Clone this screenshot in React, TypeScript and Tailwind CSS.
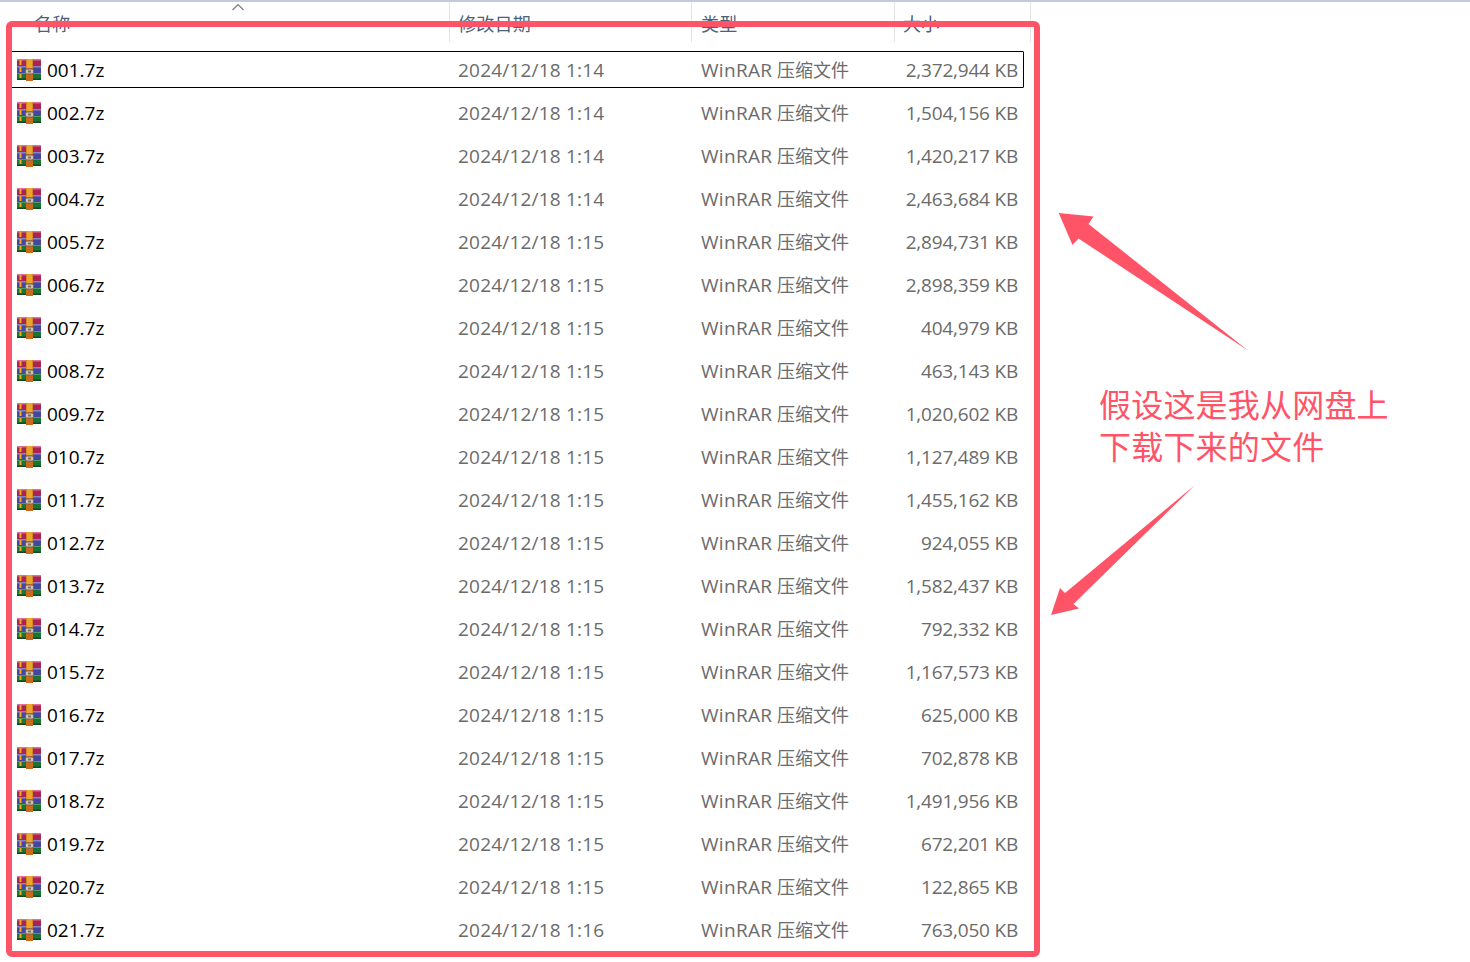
import React from 'react';

const files = [
  { name: '001.7z', date: '2024/12/18 1:14', size: '2,372,944 KB' },
  { name: '002.7z', date: '2024/12/18 1:14', size: '1,504,156 KB' },
  { name: '003.7z', date: '2024/12/18 1:14', size: '1,420,217 KB' },
  { name: '004.7z', date: '2024/12/18 1:14', size: '2,463,684 KB' },
  { name: '005.7z', date: '2024/12/18 1:15', size: '2,894,731 KB' },
  { name: '006.7z', date: '2024/12/18 1:15', size: '2,898,359 KB' },
  { name: '007.7z', date: '2024/12/18 1:15', size: '404,979 KB' },
  { name: '008.7z', date: '2024/12/18 1:15', size: '463,143 KB' },
  { name: '009.7z', date: '2024/12/18 1:15', size: '1,020,602 KB' },
  { name: '010.7z', date: '2024/12/18 1:15', size: '1,127,489 KB' },
  { name: '011.7z', date: '2024/12/18 1:15', size: '1,455,162 KB' },
  { name: '012.7z', date: '2024/12/18 1:15', size: '924,055 KB' },
  { name: '013.7z', date: '2024/12/18 1:15', size: '1,582,437 KB' },
  { name: '014.7z', date: '2024/12/18 1:15', size: '792,332 KB' },
  { name: '015.7z', date: '2024/12/18 1:15', size: '1,167,573 KB' },
  { name: '016.7z', date: '2024/12/18 1:15', size: '625,000 KB' },
  { name: '017.7z', date: '2024/12/18 1:15', size: '702,878 KB' },
  { name: '018.7z', date: '2024/12/18 1:15', size: '1,491,956 KB' },
  { name: '019.7z', date: '2024/12/18 1:15', size: '672,201 KB' },
  { name: '020.7z', date: '2024/12/18 1:15', size: '122,865 KB' },
  { name: '021.7z', date: '2024/12/18 1:16', size: '763,050 KB' },
];

const RarIcon = () => (
  <svg width="24" height="22" viewBox="0 0 24 22" className="shrink-0">
    <rect x="0" y="0" width="24" height="7" fill="#a82452" />
    <rect x="0" y="0" width="24" height="1.5" fill="#e0709a" />
    <rect x="0" y="7" width="24" height="7" fill="#46469c" />
    <rect x="0" y="7" width="24" height="1.5" fill="#8484c8" />
    <rect x="0" y="14" width="24" height="7" fill="#1b7436" />
    <rect x="0" y="14" width="24" height="1" fill="#4a9f5f" />
    <rect x="0" y="19.5" width="24" height="1.5" fill="#0f4a22" />
    <rect x="2.5" y="1" width="2" height="5" fill="#f5a81c" />
    <rect x="2.5" y="8" width="2" height="5" fill="#f5a81c" />
    <rect x="2.5" y="15" width="2" height="4" fill="#f5a81c" />
    <rect x="9" y="0" width="7" height="22" fill="#c8691c" />
    <rect x="9.5" y="0" width="6" height="9" fill="#eaa52c" />
    <rect x="8.5" y="10" width="8" height="5" rx="1.5" fill="#c9c4bb" stroke="#6f6557" strokeWidth="1" />
    <rect x="11" y="11.5" width="3" height="2" fill="#8d6a44" />
  </svg>
);

const Row = ({ name, date, size, selected }: { name: string; date: string; size: string; selected: boolean }) => (
  <div className="h-[43px] w-[1024px] py-[3px] pl-[11px]">
    <div className={`flex h-[37px] items-center rounded-[1px] border ${selected ? 'border-black' : 'border-transparent'}`}>
      <div className="flex w-[437px] items-center gap-[6px] pl-[5px] tracking-normal text-black">
        <RarIcon />
        <span className="pt-[2px]">{name}</span>
      </div>
      <div className="w-[243px] pl-[9px] pt-[2px] tracking-[0.2px]">{date}</div>
      <div className="w-[200px] pl-[9px] pt-[2px]">
        <span className="tracking-[0.3px]">WinRAR</span> <span className="text-[18px] tracking-normal">压缩文件</span>
      </div>
      <div className="flex-1 pr-[5px] pt-[2px] text-right">{size}</div>
    </div>
  </div>
);

export default function App() {
  return (
    <div className="relative h-[962px] w-[1470px] overflow-hidden bg-white font-['Open_Sans','Noto_Sans_CJK_SC',sans-serif] text-[19px] tracking-[-0.2px] text-[#6b6b6b]">
      <div className="h-[2px] bg-[#c1cbdb]" />

      <div className="relative flex h-[40px] w-[1031px] text-[18px] tracking-[0.25px] text-[#4c607a]">
        <div className="w-[450px] border-r border-[#e5e5e5] pl-[34px] pt-[9px]">名称</div>
        <div className="w-[242px] border-r border-[#e5e5e5] pl-[8px] pt-[9px]">修改日期</div>
        <div className="w-[203px] border-r border-[#e5e5e5] pl-[9px] pt-[9px]">类型</div>
        <div className="w-[136px] border-r border-[#e5e5e5] pl-[8px] pt-[9px]">大小</div>
        <svg width="14" height="8" viewBox="0 0 14 8" className="absolute left-[231px] top-[1px]">
          <path d="M1.5 7 L7 1.5 L12.5 7" fill="none" stroke="#7b7b7b" strokeWidth="1.2" />
        </svg>
      </div>

      <div className="pt-[6px]">
        {files.map((f, i) => (
          <Row key={f.name} name={f.name} date={f.date} size={f.size} selected={i === 0} />
        ))}
      </div>

      {/* 红框标注 */}
      <div className="absolute left-[6px] top-[21px] h-[936px] w-[1034px] rounded-[6px] border-[6px] border-[#ff5468]" />

      <svg width="1470" height="962" viewBox="0 0 1470 962" className="absolute left-0 top-0">
        <polygon points="1058.7,213 1093.5,216.5 1088.5,224 1248,350.5 1078.5,238.5 1072.5,245" fill="#ff5468" />
        <polygon points="1195,485 1073.5,604 1079,608.5 1051,615 1060,588 1065,593" fill="#ff5468" />
      </svg>

      <div className="absolute left-[1099px] top-[382px] w-[310px] font-['Noto_Sans_CJK_SC',sans-serif] text-[32px] font-normal leading-[42px] tracking-[0.2px] text-[#ff5468]">
        假设这是我从网盘上
        <br />
        下载下来的文件
      </div>
    </div>
  );
}
